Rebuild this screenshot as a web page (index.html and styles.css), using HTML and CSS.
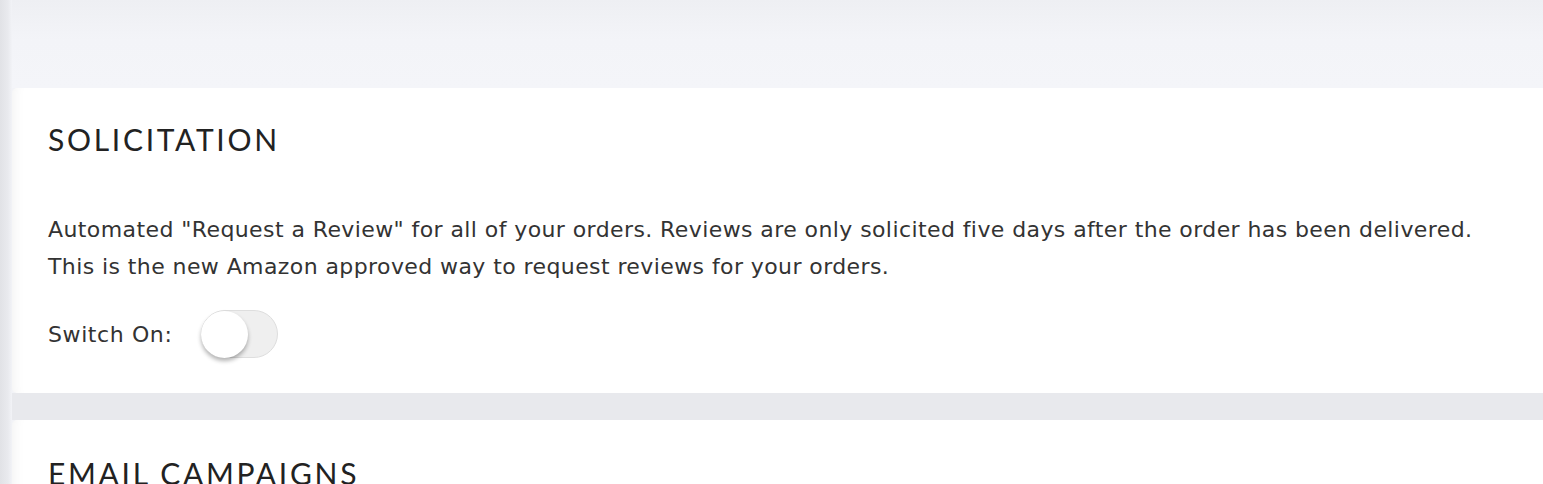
FILE: index.html
```html
<!DOCTYPE html>
<html lang="en">
<head>
<meta charset="utf-8">
<title>Solicitation</title>
<link rel="stylesheet" href="styles.css">
</head>
<body>
<div class="page">
  <div class="topbar"></div>
  <section class="card">
    <h2 class="card-title">SOLICITATION</h2>
    <p class="desc"><span class="line">Automated "Request a Review" for all of your orders. Reviews are only solicited five days after the order has been delivered.</span><br><span class="line">This is the new Amazon approved way to request reviews for your orders.</span></p>
    <div class="switch-row">
      <span class="switch-label">Switch On:</span>
      <span class="switch"><span class="knob"></span></span>
    </div>
  </section>
  <div class="gap"></div>
  <section class="card card-last">
    <h2 class="card-title">EMAIL CAMPAIGNS</h2>
  </section>
</div>
</body>
</html>
```
FILE: styles.css
```css
html, body {
  margin: 0;
  padding: 0;
  height: 100%;
  overflow: hidden;
}
body {
  background: #eef0f4;
  font-family: "DejaVu Sans", Inter, sans-serif;
  color: #333333;
}
.page {
  padding-left: 12px;
  min-height: 100%;
  background: linear-gradient(to right, #e1e2e6 0, #e9eaee 8px, #f2f3f7 12px);
}
.topbar {
  height: 88px;
  background: linear-gradient(to bottom, #eeeff3 0, #f3f4f8 40px, #f4f5f9 88px);
}
.card {
  background: #ffffff;
  border-radius: 5px 0 0 5px;
  padding: 0 0 0 36px;
  box-shadow: inset 14px 0 14px -14px rgba(0, 0, 0, 0.07);
  display: flex;
  flex-direction: column;
}
.card-title {
  margin: 0;
  padding-top: 33px;
  font-family: Lato, sans-serif;
  font-weight: 400;
  font-size: 30px;
  line-height: 36px;
  letter-spacing: 2.7px;
  color: #222222;
}
.desc {
  margin: 54px 0 0 0;
  font-size: 22px;
  line-height: 37px;
  letter-spacing: 0.41px;
}
.switch-row {
  display: flex;
  align-items: center;
  gap: 29px;
  margin-top: 25px;
  padding-bottom: 35px;
  font-size: 22px;
  letter-spacing: 0.6px;
}
.switch {
  width: 77px;
  height: 48px;
  box-sizing: border-box;
  border: 1px solid #dedede;
  background: #efefef;
  border-radius: 24px;
  display: flex;
  align-items: center;
}
.knob {
  width: 47px;
  height: 47px;
  border-radius: 50%;
  background: #ffffff;
  box-shadow: 0 3px 4px rgba(0, 0, 0, 0.3);
  margin-left: -1px;
}
.gap {
  height: 27px;
  background: #e8e9ed;
}
.card-last {
  border-radius: 5px 0 0 0;
  height: 200px;
}
.card-last .card-title {
  padding-top: 35px;
}
```
